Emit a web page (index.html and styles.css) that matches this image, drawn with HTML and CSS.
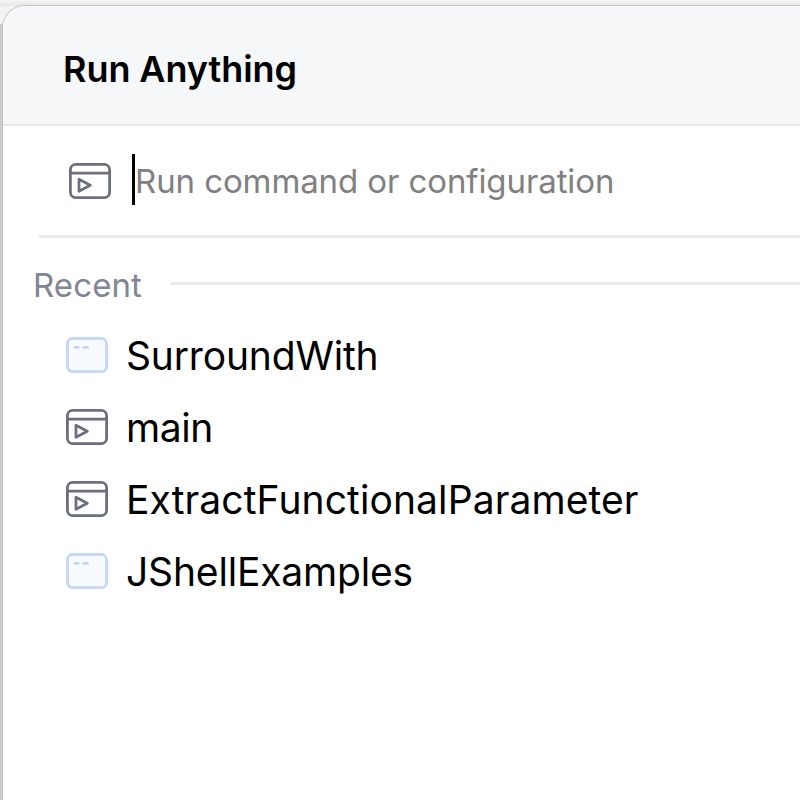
FILE: index.html
```html
<!DOCTYPE html>
<html lang="en">
<head>
<meta charset="utf-8">
<title>Run Anything</title>
<link rel="stylesheet" href="styles.css">
</head>
<body>
<svg class="defs" aria-hidden="true">
  <symbol id="run" viewBox="0 0 44 38">
    <rect x="2.4" y="2.4" width="39.2" height="33.2" rx="5.3" fill="none" stroke="#6c707e" stroke-width="2.8"/>
    <path d="M2.5 11.2H41.5" stroke="#6c707e" stroke-width="2.8"/>
    <path d="M11 17.3V29.3L22.3 23.3Z" fill="none" stroke="#6c707e" stroke-width="2.8" stroke-linejoin="round"/>
  </symbol>
  <symbol id="app" viewBox="0 0 44 38">
    <rect x="2.4" y="2.4" width="39.2" height="33.2" rx="5.3" fill="#f7faff" stroke="#c4d6f5" stroke-width="2.8"/>
    <path d="M8.6 11.3H14.6M17.6 11.3H23.6" stroke="#c4d6f5" stroke-width="2.7"/>
  </symbol>
</svg>
<main class="window">
  <header class="title"><h1>Run Anything</h1></header>
  <div class="search">
    <svg class="icon"><use href="#run"/></svg>
    <span class="caret"></span>
    <span class="placeholder">Run command or configuration</span>
  </div>
  <div class="section"><span>Recent</span></div>
  <ul class="list">
    <li><svg class="icon"><use href="#app"/></svg><span class="short">SurroundWith</span></li>
    <li><svg class="icon"><use href="#run"/></svg><span class="main">main</span></li>
    <li><svg class="icon"><use href="#run"/></svg><span class="long">ExtractFunctionalParameter</span></li>
    <li><svg class="icon"><use href="#app"/></svg><span class="short">JShellExamples</span></li>
  </ul>
</main>
</body>
</html>
```
FILE: styles.css
```css
* { box-sizing: border-box; }
body { margin: 0; height: 800px; overflow: hidden; padding: 6px 0 0 3px; background: linear-gradient(90deg, #d0d0d2, #c2c2c5) 0 24px / 3px 776px no-repeat, linear-gradient(#f5f5f4, #e6e6e6) 0 0 / 100% 6px no-repeat, #f2f2f2; font-family: Inter, sans-serif; color: #000; }
.defs { position: absolute; width: 0; height: 0; }
.window { height: 794px; background: #fff; border-radius: 22px 0 0 0; overflow: hidden; box-shadow: 0 0 0 1px #c3c3c5; }
.title { height: 120px; padding-left: 60px; display: flex; align-items: center; background: #f6f7f9; border-bottom: 2px solid #e9eaec; }
h1 { margin: 8px 0 0; font-size: 36px; line-height: 44px; font-weight: 600; letter-spacing: -0.07px; white-space: nowrap; }
.icon { width: 44px; height: 38px; flex: none; }
.search { margin-left: 36px; height: 112px; padding: 1px 0 0 29px; display: flex; align-items: center; border-bottom: 3px solid #ebecf0; }
.caret { width: 3px; height: 51px; margin-left: 20px; margin-top: -4px; background: #000; }
.placeholder { font-size: 33px; letter-spacing: -0.1px; color: #808080; white-space: nowrap; }
.section { height: 81px; padding: 13px 0 0 30px; display: flex; align-items: center; font-size: 33px; letter-spacing: 0.1px; color: #818594; }
.section::after { content: ""; flex: 1; height: 3px; margin: -3px 0 0 29px; background: #ebecf0; }
.list { margin: 0; padding: 0 0 0 62px; list-style: none; font-size: 39px; }
.list li { height: 72px; display: flex; align-items: center; gap: 17px; white-space: nowrap; }
.short { letter-spacing: -0.17px; }
.main { letter-spacing: -0.4px; }
.long { letter-spacing: 0.1px; }
```
